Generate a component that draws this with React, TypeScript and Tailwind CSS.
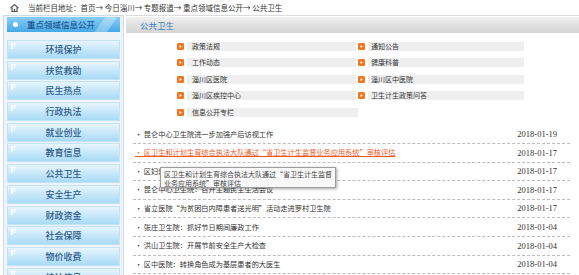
import React from "react";

const cjk = { fontFamily: '"Noto Sans CJK SC", "Noto Sans", sans-serif' };
const serif = { fontFamily: '"Liberation Serif", "Noto Sans CJK SC", serif' };

const sideItems = [
  "环境保护",
  "扶贫救助",
  "民生热点",
  "行政执法",
  "就业创业",
  "教育信息",
  "公共卫生",
  "安全生产",
  "财政资金",
  "社会保障",
  "物价收费",
  "统计信息",
];

const cats: [string, string | null][] = [
  ["政策法规", "通知公告"],
  ["工作动态", "健康科普"],
  ["淄川区医院", "淄川区中医院"],
  ["淄川区疾控中心", "卫生计生政策问答"],
  ["信息公开专栏", null],
];

const news: { t: string; d: string; hot?: boolean }[] = [
  { t: "昆仑中心卫生院进一步加强产后访视工作", d: "2018-01-19" },
  { t: "区卫生和计划生育综合执法大队通过“省卫生计生监督业务应用系统”审核评估", d: "2018-01-17", hot: true },
  { t: "区妇幼保健院开展新春送温暖活动", d: "2018-01-17" },
  { t: "昆仑中心卫生院：召开主题民主生活会议", d: "2018-01-17" },
  { t: "省立医院“为贫困白内障患者送光明”活动走进罗村卫生院", d: "2018-01-17" },
  { t: "张庄卫生院：抓好节日期间廉政工作", d: "2018-01-04" },
  { t: "洪山卫生院：开展节前安全生产大检查", d: "2018-01-04" },
  { t: "区中医院：转换角色成为基层患者的大医生", d: "2018-01-04" },
];

function OrangeIcon() {
  return (
    <svg width="7" height="7" viewBox="0 0 7 7" className="shrink-0">
      <rect x="0" y="0" width="7" height="7" rx="1.2" fill="#f0771c" />
      <path d="M2.6 2 L4.8 3.5 L2.6 5 Z" fill="#fff" />
    </svg>
  );
}

function Corner() {
  return (
    <svg width="5" height="6" viewBox="0 0 5 6" className="absolute left-[3px] top-[2px]">
      <rect x="0" y="0" width="5" height="1.5" fill="#ffffff" />
      <rect x="0" y="0" width="1.5" height="6" fill="#ffffff" />
      <rect x="2.5" y="2.5" width="1.5" height="1.5" fill="#ffffff" />
    </svg>
  );
}

export default function App() {
  return (
    <div className="relative w-[579px] h-[275px] overflow-hidden bg-white text-[#333]" style={cjk}>
      {/* breadcrumb */}
      <div className="h-[15px] flex items-center pl-[10px]">
        <svg width="9" height="8" viewBox="0 0 9 8" className="shrink-0">
          <path d="M0.5 4.2 L4.5 0.6 L8.5 4.2" fill="none" stroke="#555" strokeWidth="1.2" />
          <path d="M2 3.5 V7.5 H7 V3.5" fill="none" stroke="#555" strokeWidth="1.2" />
          <rect x="3.8" y="5" width="1.4" height="2.5" fill="#555" />
        </svg>
        <span className="ml-[9px] text-[7.5px] leading-none text-[#333] whitespace-nowrap">
          当前栏目地址：首页→ 今日淄川→ 专题报道→ 重点领域信息公开→ 公共卫生
        </span>
      </div>

      <div className="flex">
        {/* sidebar */}
        <div className="ml-[3px] w-[121px] h-[262px] shrink-0 border border-[#cfdbe4] bg-[#edf3f7] pt-[1px] px-[3px]">
          <div className="relative h-[15px] flex items-center bg-gradient-to-b from-[#86cdf5] to-[#45a9e6] overflow-hidden">
            <div className="absolute right-[10px] top-[-4px] w-[10px] h-[26px] bg-white/30 rotate-[35deg]" />
            <div className="ml-[6px] w-[5px] h-[5px] rounded-full bg-white" />
            <span className="ml-[9px] text-[8.5px] leading-none font-medium text-[#1f5690]">重点领域信息公开</span>
          </div>
          <div className="mt-[8px] flex flex-col gap-[1.7px]">
            {sideItems.map((s) => (
              <div
                key={s}
                className="relative h-[19px] flex items-center justify-center bg-gradient-to-b from-[#e7f5fd] to-[#a8daf6] border border-[#c2e2f5]"
              >
                <Corner />
                <span className="text-[9px] leading-none font-medium text-[#2c5a88]">{s}</span>
              </div>
            ))}
          </div>
        </div>

        {/* content */}
        <div className="ml-[2px] flex-1 border-t border-[#dcdcdc]">
          <div className="mt-[1px] h-[16px] flex items-center pl-[14px] bg-gradient-to-b from-[#f1f1f1] via-[#e0e0e0] to-[#d6d6d6]">
            <span className="text-[8.5px] leading-none text-[#3d7fc1]">公共卫生</span>
          </div>

          <div className="pt-[5px] pl-[51px]">
            {cats.map(([a, b], i) => (
              <div key={i} className="h-[16.5px] flex items-center">
                <div className="w-[181px] flex items-center">
                  <OrangeIcon />
                  <div className={`ml-[3px] h-[9px] flex items-center bg-[#efefef] ${b ? "w-[169px]" : "w-[171px]"}`}>
                    <span className="ml-[5px] text-[7px] leading-none text-[#333]">{a}</span>
                  </div>
                </div>
                {b && (
                  <div className="flex items-center">
                    <OrangeIcon />
                    <div className="ml-[3px] w-[156px] h-[9px] flex items-center bg-[#efefef]">
                      <span className="ml-[3px] text-[7px] leading-none text-[#333]">{b}</span>
                    </div>
                  </div>
                )}
              </div>
            ))}
          </div>

          <div className="mt-[5px] ml-[7px] w-[437px]">
            {news.map((n, i) => (
              <div
                key={i}
                className="h-[18.6px] flex items-center justify-between border-b border-dashed border-[#bdbdbd]"
              >
                <span
                  className={`ml-[2px] text-[7.2px] leading-none whitespace-nowrap ${
                    n.hot ? "text-[#f2581c] underline" : "text-[#333]"
                  }`}
                >
                  ·&nbsp;{n.t}
                </span>
                <span className="mr-[13px] text-[8.5px] leading-none text-[#333]" style={serif}>
                  {n.d}
                </span>
              </div>
            ))}
          </div>
        </div>
      </div>

      {/* tooltip */}
      <div className="absolute left-[160px] top-[167px] w-[176px] h-[21px] bg-[#f8f8f8] border border-[#9c9c9c] shadow-[1px_1px_3px_rgba(0,0,0,0.35)] px-[3px] pt-[2px] text-[7px] leading-[9px] text-[#444] whitespace-nowrap">
        区卫生和计划生育综合执法大队通过“省卫生计生监督
        <br />
        业务应用系统”审核评估
      </div>
    </div>
  );
}
